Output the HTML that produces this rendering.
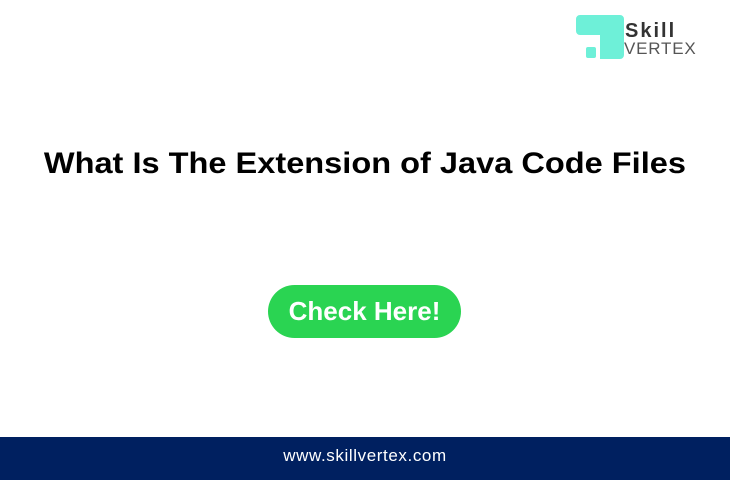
<!DOCTYPE html>
<html><head><style>
body{margin:0;width:730px;height:480px;background:#fff;position:relative;overflow:hidden;font-family:"Liberation Sans",sans-serif}
.title{position:absolute;left:0;width:730px;top:147px;text-align:center;font-weight:bold;font-size:30px;color:#000;white-space:nowrap}
.title span{display:inline-block;transform:scaleX(1.085)}
.btn{position:absolute;left:268px;top:285px;width:193px;height:53px;border-radius:27px;background:#2ad452;color:#fff;font-weight:bold;font-size:26px;text-align:center;line-height:53px}
.foot{position:absolute;left:0;top:437px;width:730px;height:43px;background:#002060;color:#fff;font-size:17px;text-align:center;line-height:38px;letter-spacing:0.6px}
.logo{position:absolute;left:576px;top:15px}
.sk{position:absolute;left:625px;top:20px;font-weight:bold;font-size:20px;color:#333;letter-spacing:2px}
.vx{position:absolute;left:624px;top:39px;font-size:17px;color:#555;letter-spacing:0.8px}
</style></head><body>
<svg class="logo" width="48" height="44" viewBox="0 0 48 44">
<path d="M4 0H44a4 4 0 0 1 4 4V40a4 4 0 0 1-4 4H24V20H4A4 4 0 0 1 0 16V4A4 4 0 0 1 4 0Z" fill="#6ef0d8"/>
<rect x="10" y="32" width="10" height="11" rx="2" fill="#6ef0d8"/>
</svg>
<div class="sk">Skill</div>
<div class="vx">VERTEX</div>
<div class="title"><span>What Is The Extension of Java Code Files</span></div>
<div class="btn">Check Here!</div>
<div class="foot">www.skillvertex.com</div>
</body></html>
